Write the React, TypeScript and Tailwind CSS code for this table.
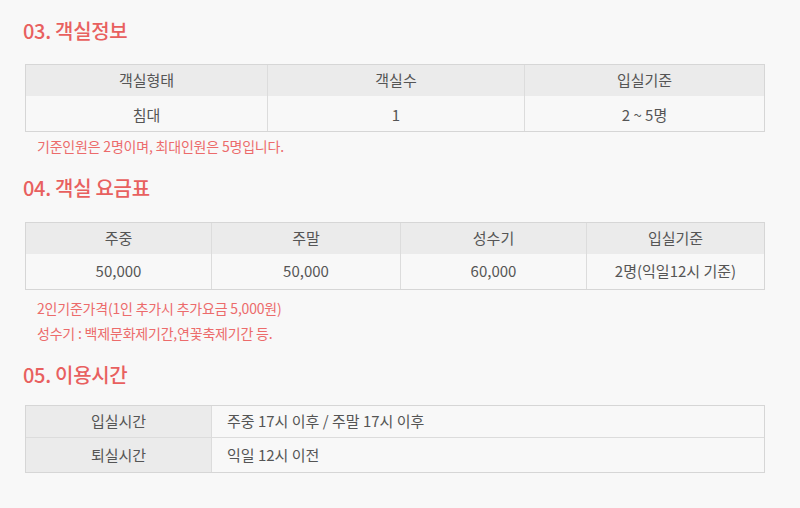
import React from "react";

const font = { fontFamily: '"Noto Sans CJK KR", "Noto Sans", sans-serif' };

function Heading({ children }: { children: React.ReactNode }) {
  return (
    <h2 className="h-[24px] text-[20px] leading-[24px] font-medium text-[#e8605f] tracking-[-0.3px] -ml-[2px]">
      {children}
    </h2>
  );
}

function Note({ children }: { children: React.ReactNode }) {
  return <p className="pl-[12px] text-[14px] leading-[25px] text-[#ec6b6b] tracking-[-0.2px]">{children}</p>;
}

export default function App() {
  const cols1 = ["w-[241px]", "w-[257px]", "flex-1"];
  const cols2 = ["w-[185px]", "w-[189px]", "w-[186px]", "flex-1"];
  return (
    <div style={font} className="w-[800px] h-[508px] bg-[#f8f8f8] pl-[25px] pr-[35px] pt-[19px] text-[#555] overflow-hidden">
      <Heading>03. 객실정보</Heading>
      <div className="mt-[21px] border border-[#d6d6d6] text-[15px]">
        <div className="flex h-[31px] bg-[#ebebeb] items-center">
          {["객실형태", "객실수", "입실기준"].map((t, i) => (
            <div key={t} className={`${cols1[i]} h-full flex items-center justify-center ${i > 0 ? "border-l border-[#dcdcdc]" : ""}`}>
              {t}
            </div>
          ))}
        </div>
        <div className="flex h-[35px] items-center">
          {["침대", "1", "2 ~ 5명"].map((t, i) => (
            <div key={t} className={`${cols1[i]} h-full flex items-center justify-center pt-[3px] ${i > 0 ? "border-l border-[#dcdcdc]" : ""}`}>
              {t}
            </div>
          ))}
        </div>
      </div>
      <div className="mt-[2px]">
        <Note>기준인원은 2명이며, 최대인원은 5명입니다.</Note>
      </div>
      <div className="mt-[17px]">
        <Heading>04. 객실 요금표</Heading>
      </div>
      <div className="mt-[22px] border border-[#d6d6d6] text-[15px]">
        <div className="flex h-[31px] bg-[#ebebeb] items-center">
          {["주중", "주말", "성수기", "입실기준"].map((t, i) => (
            <div key={t} className={`${cols2[i]} h-full flex items-center justify-center ${i > 0 ? "border-l border-[#dcdcdc]" : ""}`}>
              {t}
            </div>
          ))}
        </div>
        <div className="flex h-[35px] items-center">
          {["50,000", "50,000 ", "60,000", "2명(익일12시 기준)"].map((t, i) => (
            <div key={i} className={`${cols2[i]} h-full flex items-center justify-center ${i > 0 ? "border-l border-[#dcdcdc]" : ""}`}>
              {t}
            </div>
          ))}
        </div>
      </div>
      <div className="mt-[6px]">
        <Note>2인기준가격(1인 추가시 추가요금 5,000원)</Note>
        <Note>성수기 : 백제문화제기간,연꽃축제기간 등.</Note>
      </div>
      <div className="mt-[17px]">
        <Heading>05. 이용시간</Heading>
      </div>
      <div className="mt-[18px] border border-[#d6d6d6] text-[15px]">
        <div className="flex h-[31px]">
          <div className="w-[185px] bg-[#ebebeb] flex items-center justify-center">입실시간</div>
          <div className="flex-1 border-l border-[#dcdcdc] flex items-center pl-[15px]">주중 17시 이후 / 주말 17시 이후</div>
        </div>
        <div className="flex h-[35px] border-t border-[#dcdcdc]">
          <div className="w-[185px] bg-[#ebebeb] flex items-center justify-center">퇴실시간</div>
          <div className="flex-1 border-l border-[#dcdcdc] flex items-center pl-[15px]">익일 12시 이전</div>
        </div>
      </div>
    </div>
  );
}
